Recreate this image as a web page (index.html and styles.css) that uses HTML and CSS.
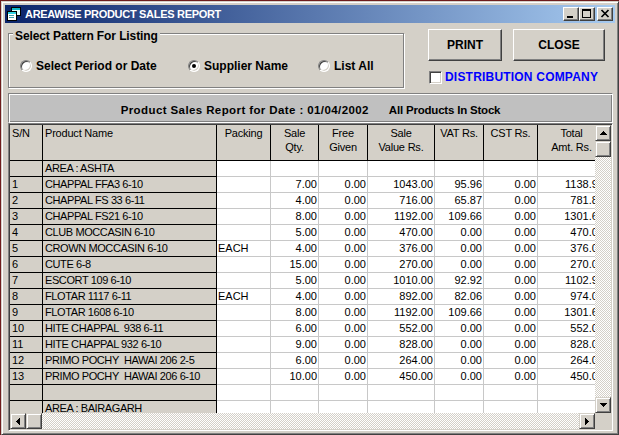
FILE: index.html
```html
<!DOCTYPE html>
<html>
<head>
<meta charset="utf-8">
<title>AREAWISE PRODUCT SALES REPORT</title>
<link rel="stylesheet" href="styles.css">
</head>
<body>
<div class="window">
  <div class="titlebar">
    <svg class="app-icon" viewBox="0 0 16 16">
      <rect x="5.5" y="1.5" width="9" height="8" fill="#e8ffff" stroke="#000"/>
      <rect x="6" y="2" width="8" height="2" fill="#10b8c8"/>
      <rect x="1.5" y="5.5" width="9" height="9" fill="#fff" stroke="#000"/>
      <rect x="2" y="6" width="8" height="2" fill="#30d0e0"/>
      <rect x="3" y="9" width="5" height="1" fill="#40a0b0"/>
      <rect x="3" y="11" width="5" height="1" fill="#40a0b0"/>
    </svg>
    <span class="title">AREAWISE PRODUCT SALES REPORT</span>
    <div class="tb-buttons">
      <span class="tb-btn"><svg viewBox="0 0 14 12"><rect x="3" y="8" width="6" height="2"/></svg></span>
      <span class="tb-btn"><svg viewBox="0 0 14 12"><path d="M2 1h9v9H2z M3 3v6h7V3z" fill-rule="evenodd"/></svg></span>
      <span class="tb-btn tb-close"><svg viewBox="0 0 14 12"><path d="M3.5 2 L10.5 9 M10.5 2 L3.5 9" stroke="#000" stroke-width="1.7" fill="none"/></svg></span>
    </div>
  </div>

  <div class="content">
    <div class="top">
      <div class="group">
        <span class="group-title">Select Pattern For Listing</span>
        <div class="options">
          <label class="opt opt-1"><span class="radio"></span>Select Period or Date</label>
          <label class="opt opt-2"><span class="radio on"></span>Supplier Name</label>
          <label class="opt"><span class="radio"></span>List All</label>
        </div>
      </div>
      <div class="actions">
        <div class="btn-row">
          <button class="btn btn-print">PRINT</button>
          <button class="btn btn-close">CLOSE</button>
        </div>
        <label class="check"><span class="checkbox"></span>DISTRIBUTION COMPANY</label>
      </div>
    </div>

    <div class="report-bar">
      <span class="rb-date">Product Sales Report for Date : 01/04/2002</span>
      <span class="rb-all">All Products In Stock</span>
    </div>

    <div class="grid">
      <div class="viewport">
        <table>
          <thead>
            <tr class="hdr">
              <th class="l w-sn">S/N</th>
              <th class="l w-nm">Product Name</th>
              <th class="w-pk">Packing</th>
              <th class="w-qty">Sale<br>Qty.</th>
              <th class="w-free">Free<br>Given</th>
              <th class="w-val">Sale<br>Value Rs.</th>
              <th class="w-vat">VAT Rs.</th>
              <th class="w-cst">CST Rs.</th>
              <th class="w-tot">Total<br>Amt. Rs.</th>
            </tr>
          </thead>
          <tbody>
            <tr><td class="sn"></td><td class="nm">AREA : ASHTA</td><td class="pk"></td><td class="n"></td><td class="n"></td><td class="n"></td><td class="n"></td><td class="n"></td><td class="n"></td></tr>
            <tr><td class="sn">1</td><td class="nm">CHAPPAL FFA3 6-10</td><td class="pk"></td><td class="n">7.00</td><td class="n">0.00</td><td class="n">1043.00</td><td class="n">95.96</td><td class="n">0.00</td><td class="n">1138.96</td></tr>
            <tr><td class="sn">2</td><td class="nm">CHAPPAL FS 33 6-11</td><td class="pk"></td><td class="n">4.00</td><td class="n">0.00</td><td class="n">716.00</td><td class="n">65.87</td><td class="n">0.00</td><td class="n">781.87</td></tr>
            <tr><td class="sn">3</td><td class="nm">CHAPPAL FS21 6-10</td><td class="pk"></td><td class="n">8.00</td><td class="n">0.00</td><td class="n">1192.00</td><td class="n">109.66</td><td class="n">0.00</td><td class="n">1301.66</td></tr>
            <tr><td class="sn">4</td><td class="nm">CLUB MOCCASIN 6-10</td><td class="pk"></td><td class="n">5.00</td><td class="n">0.00</td><td class="n">470.00</td><td class="n">0.00</td><td class="n">0.00</td><td class="n">470.00</td></tr>
            <tr><td class="sn">5</td><td class="nm">CROWN MOCCASIN 6-10</td><td class="pk">EACH</td><td class="n">4.00</td><td class="n">0.00</td><td class="n">376.00</td><td class="n">0.00</td><td class="n">0.00</td><td class="n">376.00</td></tr>
            <tr><td class="sn">6</td><td class="nm">CUTE 6-8</td><td class="pk"></td><td class="n">15.00</td><td class="n">0.00</td><td class="n">270.00</td><td class="n">0.00</td><td class="n">0.00</td><td class="n">270.00</td></tr>
            <tr><td class="sn">7</td><td class="nm">ESCORT 109 6-10</td><td class="pk"></td><td class="n">5.00</td><td class="n">0.00</td><td class="n">1010.00</td><td class="n">92.92</td><td class="n">0.00</td><td class="n">1102.92</td></tr>
            <tr><td class="sn">8</td><td class="nm">FLOTAR 1117 6-11</td><td class="pk">EACH</td><td class="n">4.00</td><td class="n">0.00</td><td class="n">892.00</td><td class="n">82.06</td><td class="n">0.00</td><td class="n">974.06</td></tr>
            <tr><td class="sn">9</td><td class="nm">FLOTAR 1608 6-10</td><td class="pk"></td><td class="n">8.00</td><td class="n">0.00</td><td class="n">1192.00</td><td class="n">109.66</td><td class="n">0.00</td><td class="n">1301.66</td></tr>
            <tr><td class="sn">10</td><td class="nm">HITE CHAPPAL  938 6-11</td><td class="pk"></td><td class="n">6.00</td><td class="n">0.00</td><td class="n">552.00</td><td class="n">0.00</td><td class="n">0.00</td><td class="n">552.00</td></tr>
            <tr><td class="sn">11</td><td class="nm">HITE CHAPPAL 932 6-10</td><td class="pk"></td><td class="n">9.00</td><td class="n">0.00</td><td class="n">828.00</td><td class="n">0.00</td><td class="n">0.00</td><td class="n">828.00</td></tr>
            <tr><td class="sn">12</td><td class="nm">PRIMO POCHY  HAWAI 206 2-5</td><td class="pk"></td><td class="n">6.00</td><td class="n">0.00</td><td class="n">264.00</td><td class="n">0.00</td><td class="n">0.00</td><td class="n">264.00</td></tr>
            <tr><td class="sn">13</td><td class="nm">PRIMO POCHY  HAWAI 206 6-10</td><td class="pk"></td><td class="n">10.00</td><td class="n">0.00</td><td class="n">450.00</td><td class="n">0.00</td><td class="n">0.00</td><td class="n">450.00</td></tr>
            <tr><td class="sn"></td><td class="nm"></td><td class="pk"></td><td class="n"></td><td class="n"></td><td class="n"></td><td class="n"></td><td class="n"></td><td class="n"></td></tr>
            <tr><td class="sn"></td><td class="nm">AREA : BAIRAGARH</td><td class="pk"></td><td class="n"></td><td class="n"></td><td class="n"></td><td class="n"></td><td class="n"></td><td class="n"></td></tr>
          </tbody>
        </table>
      </div>
      <div class="vscroll">
        <span class="sb-btn"><svg viewBox="0 0 14 14"><path d="M7 5h1v1h1v1h1v1h1v1H4V8h1V7h1V6h1z"/></svg></span>
        <span class="sb-btn"></span>
        <span class="sb-track"></span>
        <span class="sb-btn"><svg viewBox="0 0 14 14"><path d="M4 5h7v1h-1v1h-1v1h-1v1h-1v-1h-1v-1h-1v-1h-1z"/></svg></span>
      </div>
      <div class="hscroll">
        <span class="sb-btn"><svg viewBox="0 0 14 14"><path d="M8 4h1v7h-1v-1h-1v-1h-1v-1h-1v-1h1v-1h1v-1h1z"/></svg></span>
        <span class="sb-btn"></span>
        <span class="sb-track"></span>
        <span class="sb-btn"><svg viewBox="0 0 14 14"><path d="M5 4h1v1h1v1h1v1h1v1h-1v1h-1v1h-1v1h-1z"/></svg></span>
      </div>
      <div class="corner"></div>
    </div>
  </div>
</div>
</body>
</html>
```

FILE: styles.css
```css
* { box-sizing: border-box; }

html, body { margin: 0; padding: 0; }

body {
  width: 619px;
  height: 435px;
  overflow: hidden;
  background: #6e1c1c;
  font-family: "Liberation Sans", Arial, sans-serif;
  color: #000;
}

.window {
  margin: 1px 0 0 1px;
  width: 618px;
  height: 434px;
  background: #d4d0c8;
  border: 1px solid;
  border-color: #d4d0c8 #404040 #404040 #d4d0c8;
  box-shadow: inset 1px 1px #fff, inset -1px -1px #808080;
  padding: 3px;
  display: flex;
  flex-direction: column;
}

/* ---------- title bar ---------- */
.titlebar {
  height: 18px;
  flex: none;
  background: linear-gradient(to right, #0a246a, #a6caf0);
  display: flex;
  align-items: center;
  padding-left: 1px;
}

.app-icon { width: 16px; height: 16px; flex: none; display: block; }

.title {
  flex: 1;
  margin-left: 3px;
  color: #fff;
  font-weight: bold;
  font-size: 11px;
  letter-spacing: -0.3px;
  white-space: nowrap;
}

.tb-buttons { display: flex; margin-right: 2px; }

.tb-btn {
  width: 16px;
  height: 14px;
  background: #d4d0c8;
  border: 1px solid;
  border-color: #fff #404040 #404040 #fff;
  box-shadow: inset -1px -1px #808080;
  display: flex;
}

.tb-btn svg { width: 14px; height: 12px; display: block; }
.tb-close { margin-left: 2px; }

/* ---------- content ---------- */
.content {
  flex: 1;
  padding: 6px 2px 0 3px;
  display: flex;
  flex-direction: column;
}

.top {
  height: 64px;
  flex: none;
  display: flex;
  align-items: flex-start;
}

.group {
  position: relative;
  margin-top: 4px;
  width: 396px;
  height: 55px;
  border: 1px solid #808080;
  box-shadow: inset 1px 1px #fff, 1px 1px #fff;
}

.group-title {
  position: absolute;
  left: 4px;
  top: -5px;
  padding: 0 2px;
  background: #d4d0c8;
  font-weight: bold;
  font-size: 12px;
  line-height: 14px;
  letter-spacing: -0.1px;
  white-space: nowrap;
}

.options {
  display: flex;
  align-items: center;
  height: 14px;
  margin-top: 25px;
  padding-left: 11px;
}

.opt {
  display: flex;
  align-items: center;
  font-weight: bold;
  font-size: 12px;
  white-space: nowrap;
}

.opt-1 { width: 168px; }
.opt-2 { width: 130px; }

.radio {
  position: relative;
  flex: none;
  width: 12px;
  height: 12px;
  margin-right: 4px;
  border-radius: 50%;
  background: #fff;
  border: 1px solid;
  border-color: #808080 #fff #fff #808080;
  box-shadow: inset 1px 1px #404040, inset -1px -1px #d4d0c8;
}

.radio.on::after {
  content: "";
  position: absolute;
  left: 3px;
  top: 3px;
  width: 4px;
  height: 4px;
  border-radius: 50%;
  background: #000;
}

.actions {
  margin-left: 24px;
  display: flex;
  flex-direction: column;
}

.btn-row { display: flex; gap: 11px; }

.btn {
  height: 32px;
  padding: 0;
  font-family: "Liberation Sans", Arial, sans-serif;
  font-weight: bold;
  font-size: 12px;
  color: #000;
  background: #d4d0c8;
  border: 1px solid;
  border-color: #fff #404040 #404040 #fff;
  box-shadow: inset -1px -1px #808080;
}

.btn-print { width: 74px; }
.btn-close { width: 92px; }

.check {
  display: flex;
  align-items: center;
  margin-top: 9px;
  margin-left: 1px;
  color: #0000ff;
  font-weight: bold;
  font-size: 12px;
  letter-spacing: 0.2px;
  white-space: nowrap;
}

.checkbox {
  flex: none;
  width: 13px;
  height: 13px;
  margin-right: 3px;
  background: #fff;
  border: 1px solid;
  border-color: #808080 #fff #fff #808080;
  box-shadow: inset 1px 1px #404040, inset -1px -1px #d4d0c8;
}

/* ---------- report bar ---------- */
.report-bar {
  height: 30px;
  flex: none;
  background: #c0c0c0;
  border: 1px solid;
  border-color: #808080 #fff #fff #808080;
  box-shadow: inset 1px 1px #fff, inset -1px -1px #808080;
  display: flex;
  justify-content: center;
  align-items: center;
  gap: 20px;
  padding-top: 3px;
  font-weight: bold;
  font-size: 11.5px;
  white-space: nowrap;
}

.rb-date { letter-spacing: 0.4px; }
.rb-all { letter-spacing: -0.2px; }

/* ---------- grid ---------- */
.grid {
  width: 605px;
  height: 308px;
  flex: none;
  border: 1px solid;
  border-color: #808080 #fff #fff #808080;
  box-shadow: inset 1px 1px #404040, inset -1px -1px #d4d0c8;
  padding: 1px;
  background: #fff;
  display: grid;
  grid-template-columns: 1fr 16px;
  grid-template-rows: 1fr 16px;
}

.viewport {
  overflow: hidden;
  min-width: 0;
  min-height: 0;
}

table {
  table-layout: fixed;
  border-collapse: separate;
  border-spacing: 0;
  width: 596px;
  font-family: "Liberation Sans", Arial, sans-serif;
  font-size: 11px;
}

th, td {
  padding: 0;
  overflow: hidden;
  white-space: pre;
}

tr.hdr { height: 36px; }
tbody tr { height: 16px; }

th {
  background: #d4d0c8;
  border-right: 1px solid #000;
  border-bottom: 1px solid #000;
  font-weight: normal;
  vertical-align: top;
  line-height: 14px;
  padding-top: 1px;
  text-align: center;
  letter-spacing: -0.2px;
}

th.l { text-align: left; padding-left: 2px; }

.w-sn { width: 33px; }
.w-nm { width: 174px; }
.w-pk { width: 54px; }
.w-qty { width: 48px; }
.w-free { width: 49px; }
.w-val { width: 67px; }
.w-vat { width: 49px; }
.w-cst { width: 54px; }
.w-tot { width: 68px; }

td {
  line-height: 15px;
  vertical-align: top;
  background: #fff;
  border-right: 1px solid #c8c8c8;
  border-bottom: 1px solid #c8c8c8;
}

td.sn, td.nm {
  background: #d4d0c8;
  border-color: #000;
  padding-left: 2px;
}

td.nm { letter-spacing: -0.4px; }
td.pk { padding-left: 1px; }
td.n { text-align: right; padding-right: 1px; }

/* ---------- scrollbars ---------- */
.vscroll, .hscroll {
  display: flex;
  background-color: #fff;
  background-image: conic-gradient(#fff 25%, #d4d0c8 0 50%, #fff 0 75%, #d4d0c8 0);
  background-size: 2px 2px;
}

.vscroll { flex-direction: column; }

.sb-btn {
  width: 16px;
  height: 16px;
  flex: none;
  background: #d4d0c8;
  border: 1px solid;
  border-color: #d4d0c8 #404040 #404040 #d4d0c8;
  box-shadow: inset 1px 1px #fff, inset -1px -1px #808080;
}

.sb-btn svg { display: block; width: 14px; height: 14px; }

.sb-track { flex: 1; }

.corner { background: #d4d0c8; }
```
